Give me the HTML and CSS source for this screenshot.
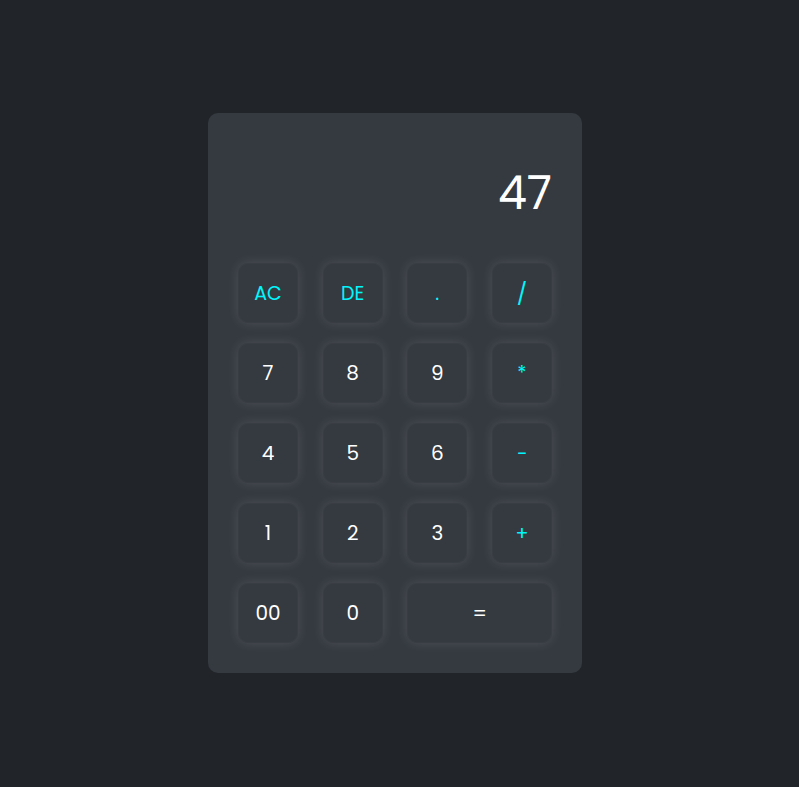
FILE: index.html
```html
<!DOCTYPE html>
<html lang="en">
<head>
<meta charset="utf-8">
<title>Calculator</title>
<link rel="stylesheet" href="styles.css">
</head>
<body>
<div class="calculator">
  <div class="display">47</div>
  <div class="keys">
    <button class="key op">AC</button>
    <button class="key op">DE</button>
    <button class="key op">.</button>
    <button class="key op slash">/</button>
    <button class="key">7</button>
    <button class="key">8</button>
    <button class="key">9</button>
    <button class="key op">*</button>
    <button class="key">4</button>
    <button class="key">5</button>
    <button class="key">6</button>
    <button class="key op">−</button>
    <button class="key">1</button>
    <button class="key">2</button>
    <button class="key">3</button>
    <button class="key op">+</button>
    <button class="key">00</button>
    <button class="key">0</button>
    <button class="key wide">=</button>
  </div>
</div>
</body>
</html>
```
FILE: styles.css
```css
* { box-sizing: border-box; }
html, body { margin: 0; padding: 0; }
body {
  background: #212429;
  width: 799px;
  height: 787px;
  font-family: "Poppins", "Lato", "Noto Sans", sans-serif;
  display: flex;
  justify-content: center;
  padding-top: 113px;
  padding-left: 16px;
  padding-right: 25px;
}
.calculator {
  width: 374px;
  height: 560px;
  background: #353940;
  border-radius: 10px;
  padding: 30px;
  display: flex;
  flex-direction: column;
}
.display {
  height: 120px;
  color: #ffffff;
  font-size: 46px;
  text-align: right;
  padding-top: 20px;
  line-height: 60px;
}
.keys {
  display: grid;
  grid-template-columns: repeat(4, 60px);
  grid-auto-rows: 60px;
  justify-content: space-between;
  row-gap: 20px;
}
.key {
  border: none;
  border-radius: 10px;
  background: #353940;
  color: #ffffff;
  font-family: inherit;
  font-size: 20px;
  box-shadow: 0 0 12px rgba(255, 255, 255, 0.12), inset 0 0 0 1px rgba(255, 255, 255, 0.02);
  padding: 0;
}
.key.op { color: #00f6fc; font-size: 19px; }
.key.slash { font-size: 22px; }
.key.wide { grid-column: span 2; }
```
